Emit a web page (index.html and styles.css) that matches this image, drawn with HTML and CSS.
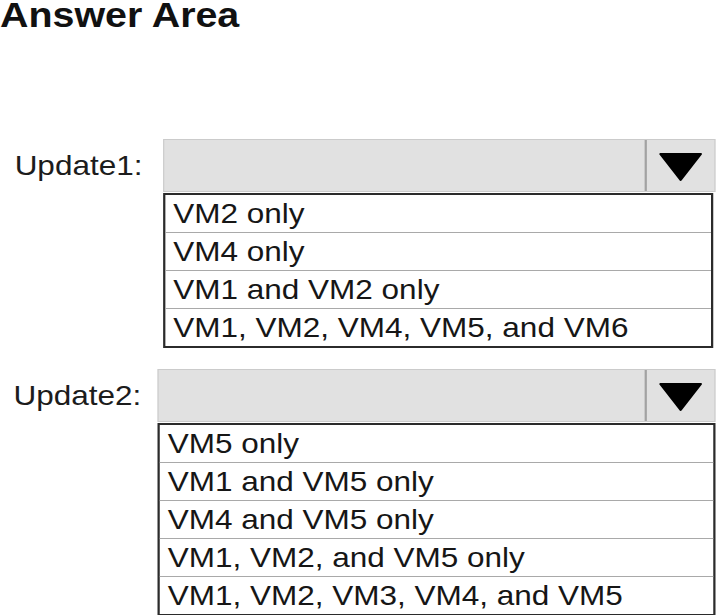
FILE: index.html
```html
<!DOCTYPE html>
<html lang="en">
<head>
  <meta charset="UTF-8">
  <meta name="viewport" content="width=device-width, initial-scale=1.0">
  <title>Answer Area</title>
  <link rel="stylesheet" href="styles.css">
</head>
<body>
  <div class="answer-area">
    <h1>Answer Area</h1>

    <!-- Update1 -->
    <div class="field field-first">
      <label class="field-label">Update1:</label>
      <div class="picker">
        <div class="select">
          <div class="select-value"></div>
          <div class="select-btn">
            <svg width="40" height="30" viewBox="0 0 40 30">
              <polygon points="2,2 38,2 20,28" fill="#000" stroke="#000" stroke-width="2" stroke-linejoin="round"/>
            </svg>
          </div>
        </div>
        <ul class="options options-short">
          <li>VM2 only</li>
          <li>VM4 only</li>
          <li>VM1 and VM2 only</li>
          <li>VM1, VM2, VM4, VM5, and VM6</li>
        </ul>
      </div>
    </div>

    <!-- Update2 -->
    <div class="field field-second">
      <label class="field-label">Update2:</label>
      <div class="picker">
        <div class="select">
          <div class="select-value"></div>
          <div class="select-btn">
            <svg width="40" height="30" viewBox="0 0 40 30">
              <polygon points="2,2 38,2 20,28" fill="#000" stroke="#000" stroke-width="2" stroke-linejoin="round"/>
            </svg>
          </div>
        </div>
        <ul class="options">
          <li>VM5 only</li>
          <li>VM1 and VM5 only</li>
          <li>VM4 and VM5 only</li>
          <li>VM1, VM2, and VM5 only</li>
          <li>VM1, VM2, VM3, VM4, and VM5</li>
        </ul>
      </div>
    </div>
  </div>
</body>
</html>
```

FILE: styles.css
```css
body {
  margin: 0;
  background: #ffffff;
  color: #161616;
  font-family: "Liberation Sans", Arial, sans-serif;
  overflow: hidden;
}
/* the source picture is a little wider than tall, so stretch the whole area */
.answer-area {
  width: 638px;
  transform: scaleX(1.125);
  transform-origin: 0 0;
}
h1 {
  margin: 0;
  font-size: 35px;
  line-height: 30px;
  font-weight: bold;
  color: #111;
}
.field {
  display: flex;
  align-items: flex-start;
}
.field-first {
  margin-top: 109px;
}
.field-second {
  margin-top: 21px;
}
.field-label {
  box-sizing: border-box;
  font-size: 28px;
  line-height: 53px;
  color: #1c1c1c;
}
.field-first .field-label {
  width: 145px;
  padding-left: 13px;
}
.field-second .field-label {
  width: 140px;
  padding-left: 12px;
}
.field-first .picker {
  width: 491px;
}
.field-second .picker {
  width: 496px;
}
.select {
  display: flex;
  box-sizing: border-box;
  height: 53px;
  background-color: #e1e1e1;
  border: 1px solid #cbcbcb;
}
.select-value {
  flex: 1;
}
.select-btn {
  width: 62px;
  display: flex;
  align-items: center;
  justify-content: center;
  padding-top: 3px;
  box-sizing: border-box;
  border-left: 2px solid #a2a2a2;
}
.options {
  list-style: none;
  margin: 1px 0 0 0;
  padding: 0;
  background: #ffffff;
  border: 2px solid #2b2b2b;
}
.options-short {
  margin-right: 2px;
}
.options li {
  font-size: 28px;
  line-height: 37px;
  padding: 0 7px;
  border-top: 1px solid #a9a9a9;
  white-space: nowrap;
}
.options li:first-child {
  border-top: none;
}
```
